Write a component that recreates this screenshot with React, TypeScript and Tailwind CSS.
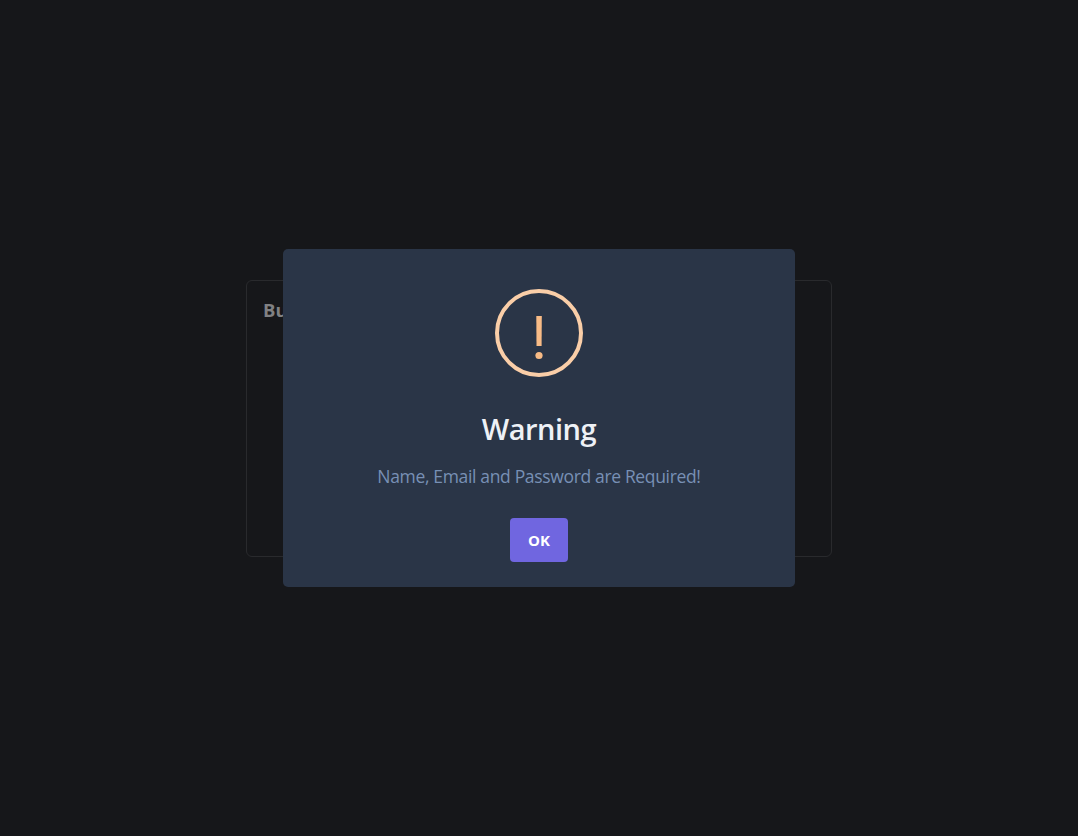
export default function App() {
  return (
    <main className="relative grid h-[836px] w-full place-items-center overflow-hidden bg-[#16171a] font-['Open_Sans','Noto_Sans',sans-serif]">
      <section className="h-[277px] w-[586px] rounded-md border border-[#292a2d] px-4 pt-4">
        <h1 className="text-[18.5px] leading-[26px] font-bold text-[#808183]">Bu</h1>
      </section>
      <div className="absolute inset-0 flex items-center justify-center">
        <div
          role="dialog"
          aria-modal="true"
          aria-labelledby="dialog-title"
          className="flex h-[338px] w-[512px] flex-col items-center rounded-[5px] bg-[#2a3547] pt-10"
        >
          <svg className="h-[88px] w-[88px]" viewBox="0 0 88 88" fill="none" aria-hidden="true">
            <circle cx="44" cy="44" r="42" stroke="#facea8" strokeWidth="4" />
            <path d="M41.3 27h5.5l-.2 30h-5.1z" fill="#f8bb86" />
            <circle cx="44" cy="66.5" r="3.6" fill="#f8bb86" />
          </svg>
          <h2
            id="dialog-title"
            className="mt-[29px] text-[29px] leading-[45px] font-semibold tracking-[-0.5px] whitespace-nowrap text-[#eef1f6]"
          >
            Warning
          </h2>
          <p className="mt-3 text-[17.5px] leading-[27px] tracking-[-0.34px] whitespace-nowrap text-[#7890b5]">
            Name, Email and Password are Required!
          </p>
          <button
            type="button"
            className="mt-[28px] flex h-11 w-[58px] items-center justify-center rounded bg-[#7066e0] text-[15px] font-bold text-white"
          >
            OK
          </button>
        </div>
      </div>
    </main>
  );
}
